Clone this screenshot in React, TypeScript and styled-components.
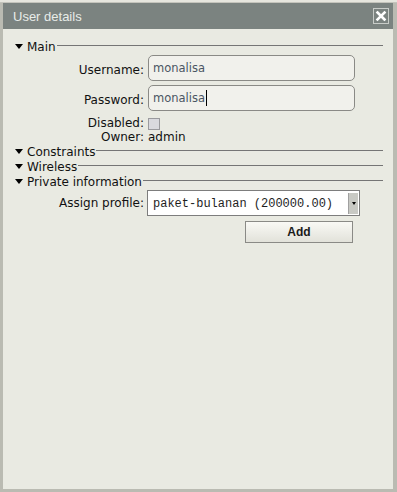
import React from 'react';
import styled, { createGlobalStyle } from 'styled-components';

const GlobalStyle = createGlobalStyle`
  html, body {
    margin: 0;
    padding: 0;
    background: #e4e4dc;
  }
  body {
    font-family: "DejaVu Sans", sans-serif;
  }
`;

const Screen = styled.div`
  width: 397px;
  height: 492px;
  box-sizing: border-box;
  display: flex;
  flex-direction: column;
`;

const TopStrip = styled.div`
  height: 3px;
  flex: none;
  background: #e6e6de;
  border-bottom: 1px solid #c4c4bc;
  box-sizing: border-box;
`;

const Frame = styled.div`
  flex: 1;
  display: flex;
  flex-direction: column;
  background: #babbb2;
  padding: 0 4px 3px 3px;
  min-height: 0;
`;

const TitleBar = styled.div`
  height: 26px;
  flex: none;
  display: flex;
  align-items: center;
  justify-content: space-between;
  background: #7b8380;
  padding: 0 4px 0 10px;
  color: #e8ece8;
  font-family: "Liberation Sans", Arial, sans-serif;
  font-size: 13px;
`;

const CloseButton = styled.div`
  width: 14px;
  height: 14px;
  border: 1px solid #c8ccc8;
  display: flex;
  align-items: center;
  justify-content: center;
`;

const Body = styled.div`
  flex: 1;
  background: #e9eae2;
  padding: 10px 10px 0 12px;
  display: flex;
  flex-direction: column;
`;

const Legend = styled.div`
  height: 15px;
  display: flex;
  align-items: center;
  font-size: 12px;
  color: #111;

  &::after {
    content: '';
    flex: 1;
    height: 0;
    border-top: 1px solid #757575;
    margin: -3px 0 0 1px;
  }
`;

const Arrow = styled.span`
  width: 0;
  height: 0;
  border-left: 4px solid transparent;
  border-right: 4px solid transparent;
  border-top: 5px solid #000;
  margin: 0 4px 0 0;
`;

const Rows = styled.div<{ $top: number }>`
  display: grid;
  grid-template-columns: 129px 1fr;
  column-gap: 4px;
  align-items: center;
  margin-top: ${p => p.$top}px;
  font-size: 12px;
  color: #111;
`;

const Label = styled.div<{ $shift?: number }>`
  text-align: right;
  line-height: 13px;
  margin-top: ${p => p.$shift ?? 0}px;
`;

const Value = styled.div<{ $shift?: number }>`
  line-height: 13px;
  margin-top: ${p => p.$shift ?? 0}px;
`;

const TextBox = styled.div`
  width: 207px;
  height: 26px;
  margin-bottom: 4px;
  box-sizing: border-box;
  border: 1px solid #8a8a86;
  border-radius: 5px;
  background: #f1f1ec;
  display: flex;
  align-items: center;
  padding-left: 4px;
  font-size: 11.5px;
  color: #4a5663;
`;

const Caret = styled.span`
  width: 1px;
  height: 16px;
  background: #000;
  margin-left: 1px;
`;

const Check = styled.div`
  width: 12px;
  height: 12px;
  margin-top: 2px;
  box-sizing: border-box;
  border: 1px solid #9a9a9e;
  background: #d9d9de;
`;

const Select = styled.div`
  width: 213px;
  height: 26px;
  margin-left: -1px;
  box-sizing: border-box;
  border: 1px solid #7d7d7d;
  background: #fff;
  display: flex;
  align-items: stretch;
  padding: 2px 1px 1px 5px;
`;

const SelectText = styled.div`
  flex: 1;
  display: flex;
  align-items: center;
  font-family: "Liberation Mono", monospace;
  font-size: 12px;
  color: #1e1e1e;
  white-space: nowrap;
`;

const SelectButton = styled.div`
  width: 9px;
  background: #c8c9c4;
  border-left: 1px solid #a0a0a0;
  display: flex;
  align-items: center;
  justify-content: center;

  &::before {
    content: '';
    border-left: 2.5px solid transparent;
    border-right: 2.5px solid transparent;
    border-top: 3px solid #000;
  }
`;

const ButtonCell = styled.div`
  display: flex;
  justify-content: flex-end;
  padding-right: 30px;
  margin-top: 5px;
`;

const Button = styled.div`
  width: 108px;
  height: 22px;
  box-sizing: border-box;
  border: 1px solid #8a8a86;
  background: linear-gradient(#f9f9f5, #e2e2da);
  display: flex;
  align-items: center;
  justify-content: center;
  font-family: "Liberation Sans", Arial, sans-serif;
  font-weight: bold;
  font-size: 12px;
  color: #1a1a1a;
`;

const sections = ['Constraints', 'Wireless', 'Private information'];

export default function App() {
  return (
    <>
      <GlobalStyle />
      <Screen>
        <TopStrip />
        <Frame>
          <TitleBar>
            User details
            <CloseButton>
              <svg width="12" height="12" viewBox="0 0 12 12">
                <path d="M2.5 2.5L9.5 9.5M9.5 2.5L2.5 9.5" stroke="#fff" strokeWidth="2.6" strokeLinecap="square" />
              </svg>
            </CloseButton>
          </TitleBar>
          <Body>
            <Legend><Arrow />Main</Legend>
            <Rows $top={1}>
              <Label>Username:</Label>
              <TextBox>monalisa</TextBox>
              <Label>Password:</Label>
              <TextBox>monalisa<Caret /></TextBox>
              <Label $shift={2}>Disabled:</Label>
              <Check />
              <Label $shift={1}>Owner:</Label>
              <Value $shift={1}>admin</Value>
            </Rows>
            {sections.map(s => (
              <Legend key={s}><Arrow />{s}</Legend>
            ))}
            <Rows $top={1}>
              <Label>Assign profile:</Label>
              <Select>
                <SelectText>paket-bulanan (200000.00)</SelectText>
                <SelectButton />
              </Select>
              <div />
              <ButtonCell>
                <Button>Add</Button>
              </ButtonCell>
            </Rows>
          </Body>
        </Frame>
      </Screen>
    </>
  );
}
